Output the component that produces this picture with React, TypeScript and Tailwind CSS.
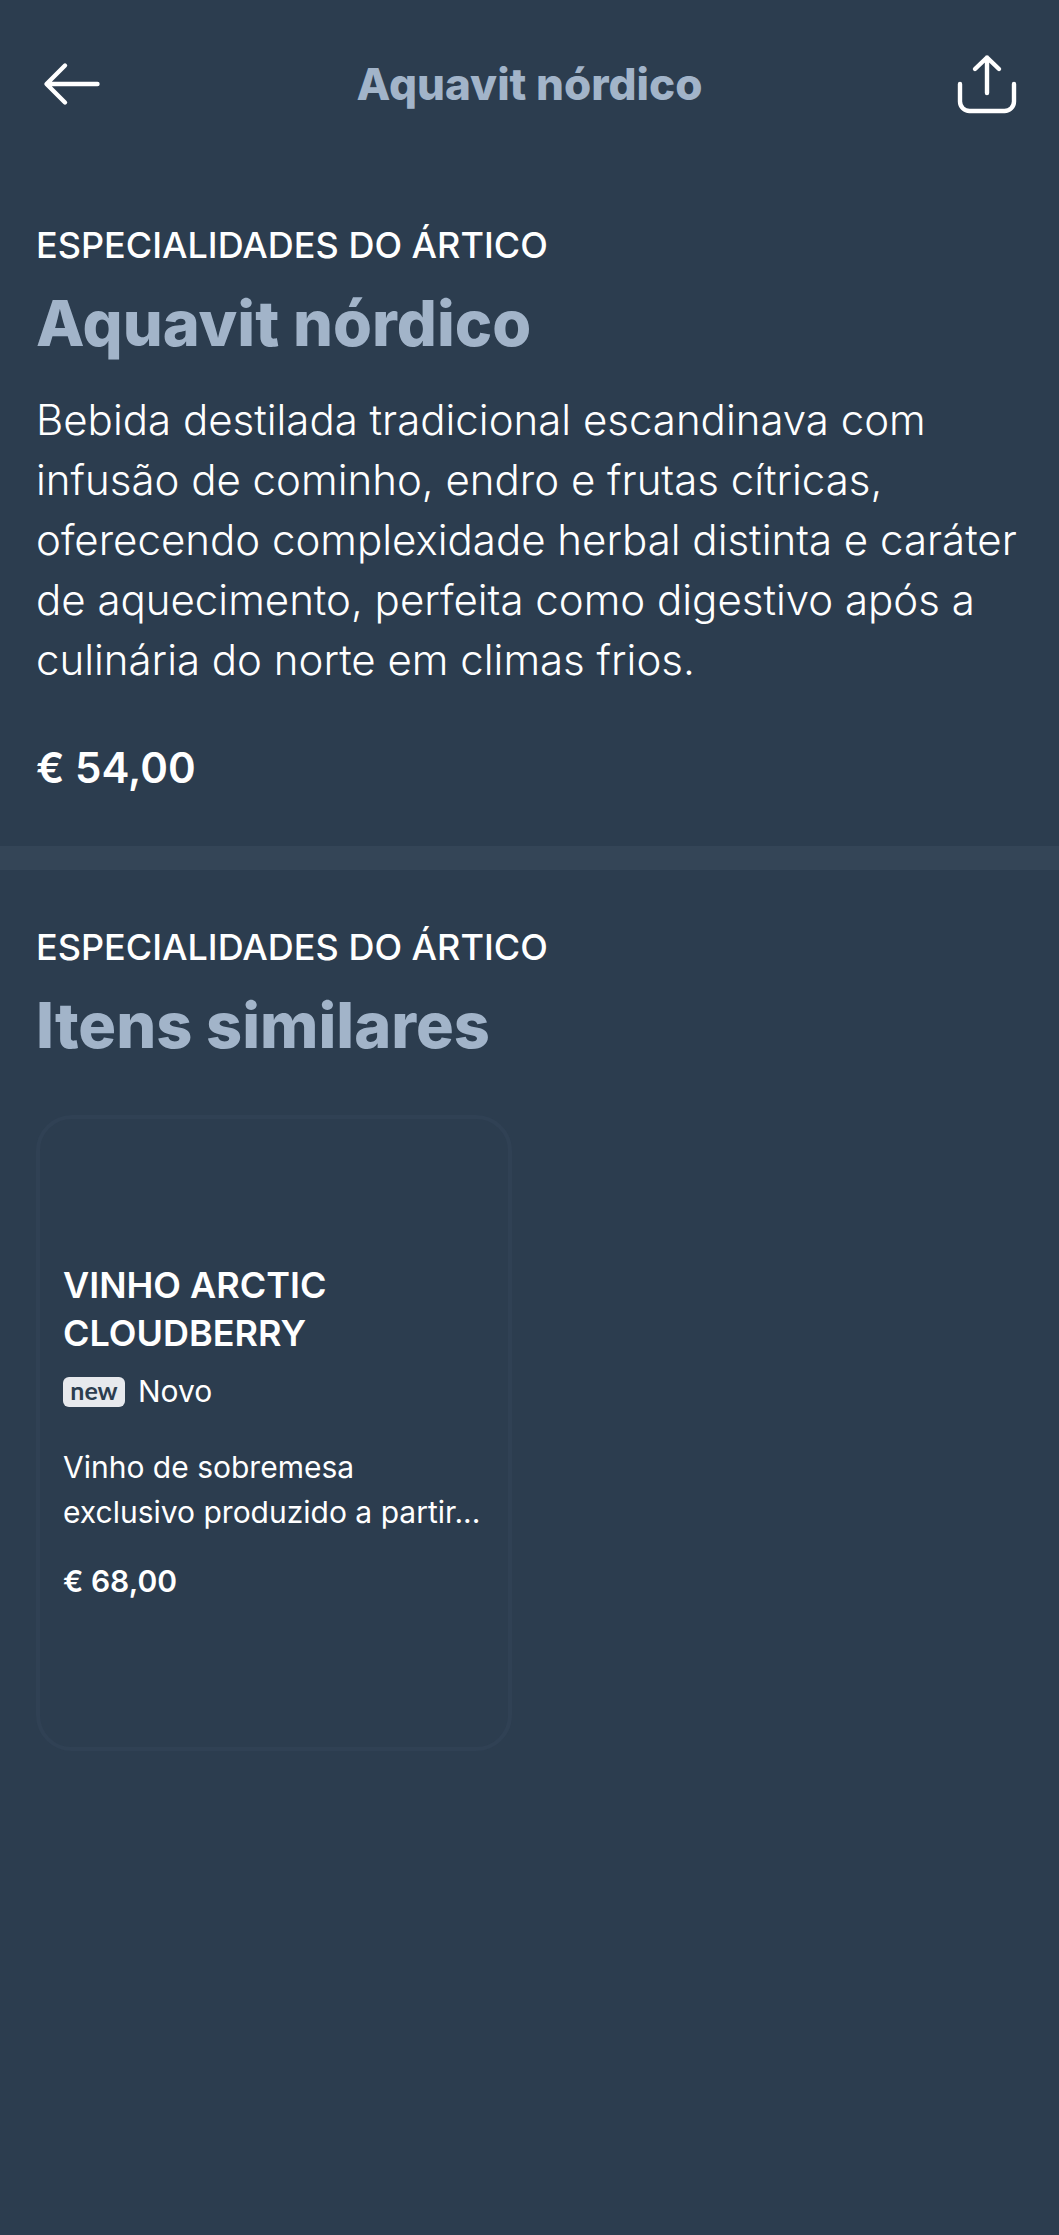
import React from "react";

function Heading({ title }: { title: string }) {
  return (
    <>
      <p className="text-[36px] leading-12 font-medium text-white">ESPECIALIDADES DO ÁRTICO</p>
      <h2 className="mt-3 text-[63px] leading-[84px] font-extrabold text-[#a2b4c9]">{title}</h2>
    </>
  );
}

export default function App() {
  return (
    <main className="min-h-screen bg-[#2c3d4f] font-['Inter',sans-serif] text-white">
      <header className="grid grid-cols-[64px_1fr_64px] items-center px-10 py-13">
        <button type="button" aria-label="Voltar" className="flex size-16 items-center justify-center">
          <svg viewBox="0 0 64 64" className="size-16" fill="none" stroke="currentColor" strokeWidth="4.4" strokeLinecap="round" strokeLinejoin="round">
            <path d="M57.5 32H7M25 13.5L6.5 32L25 50.5" />
          </svg>
        </button>
        <h1 className="text-center text-[44px] leading-16 font-extrabold text-[#a2b4c9]">Aquavit nórdico</h1>
        <button type="button" aria-label="Compartilhar" className="flex size-16 items-center justify-center">
          <svg viewBox="0 0 64 64" className="size-16" fill="none" stroke="currentColor" strokeWidth="4.4" strokeLinecap="round" strokeLinejoin="round">
            <path d="M5 32V49.5a9.5 9.5 0 0 0 9.5 9.5H49.5a9.5 9.5 0 0 0 9.5-9.5V32M32 41V5.5M20 17L32 5.5L44 17" />
          </svg>
        </button>
      </header>
      <section className="px-9 pt-[53px] pb-12">
        <Heading title="Aquavit nórdico" />
        <p className="mt-[25px] text-[42px] leading-[60px] font-light">
          Bebida destilada tradicional escandinava com infusão de cominho, endro e frutas cítricas, oferecendo
          complexidade herbal distinta e caráter de aquecimento, perfeita como digestivo após a culinária do norte em
          climas frios.
        </p>
        <p className="mt-12 text-[42px] leading-[60px] font-semibold">€ 54,00</p>
      </section>
      <div className="h-6 bg-[#344557]" />
      <section className="px-9 pt-[53px] pb-12">
        <Heading title="Itens similares" />
        <article className="mt-12 w-[476px] rounded-[36px] border-4 border-[#304154] px-[23px] pt-[142px] pb-[143px]">
          <h3 className="text-[36px] leading-12 font-semibold">VINHO ARCTIC CLOUDBERRY</h3>
          <div className="mt-3 flex items-center gap-[13px] text-[30px] leading-[45px]">
            <span className="flex h-[30px] w-[62px] justify-center rounded-md bg-[#e7e9ed] font-['Lato',sans-serif] text-[25px] leading-[26px] font-bold text-[#2c3d4f]">
              new
            </span>
            Novo
          </div>
          <p className="mt-[31px] text-[30px] leading-[45px]">Vinho de sobremesa exclusivo produzido a partir...</p>
          <p className="mt-6 text-[30px] leading-[45px] font-semibold">€ 68,00</p>
        </article>
      </section>
    </main>
  );
}
